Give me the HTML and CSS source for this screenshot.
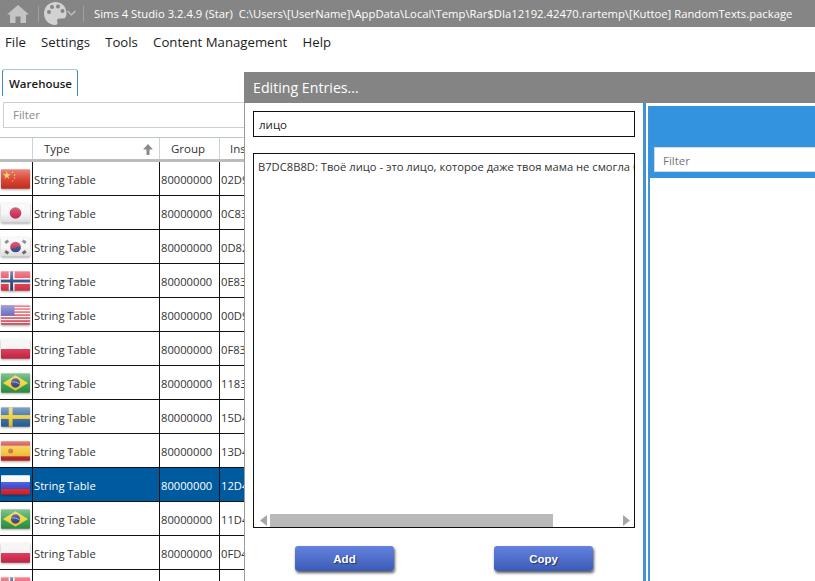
FILE: index.html
```html
<!DOCTYPE html>
<html lang="en">
<head>
<meta charset="utf-8">
<title>Sims 4 Studio</title>
<link rel="stylesheet" href="styles.css">
</head>
<body>
<svg class="defs" width="0" height="0" aria-hidden="true">
  <defs>
    <linearGradient id="gloss" x1="0" y1="0" x2="0" y2="1">
      <stop offset="0" stop-color="#fff" stop-opacity=".42"/>
      <stop offset=".5" stop-color="#fff" stop-opacity=".12"/>
      <stop offset="1" stop-color="#000" stop-opacity=".12"/>
    </linearGradient>
    <symbol id="f-cn" viewBox="0 0 30 20"><rect width="30" height="20" fill="#d8301f"/><path d="M6 2l1 3 3 0-2.500 2 1 3L6 8 3.500 10l1-3L2 5l3 0z" fill="#f6d13c"/><g fill="#f0b030"><circle cx="12" cy="3" r=".8"/><circle cx="14" cy="6" r=".8"/><circle cx="14" cy="9" r=".8"/><circle cx="12" cy="12" r=".8"/></g></symbol>
    <symbol id="f-jp" viewBox="0 0 30 20"><rect width="30" height="20" fill="#f6f6f6"/><circle cx="15" cy="10" r="6" fill="#c9244c"/></symbol>
    <symbol id="f-kr" viewBox="0 0 30 20"><rect width="30" height="20" fill="#f6f6f6"/><circle cx="15" cy="10" r="5.500" fill="#c9244c"/><path d="M9.800 11a5.500 5.500 0 0 0 10.700 0c-1.500-1.800-3.500-1.800-5.300-.5-1.800 1.300-3.900 1.500-5.400.5z" fill="#20488f"/><g fill="#666"><rect x="4" y="3" width="4" height="3" transform="rotate(-35 6 4.500)"/><rect x="22" y="3" width="4" height="3" transform="rotate(35 24 4.500)"/><rect x="4" y="14" width="4" height="3" transform="rotate(35 6 15.500)"/><rect x="22" y="14" width="4" height="3" transform="rotate(-35 24 15.500)"/></g></symbol>
    <symbol id="f-no" viewBox="0 0 30 20"><rect width="30" height="20" fill="#e8344a"/><rect x="8" width="6" height="20" fill="#fff"/><rect y="7" width="30" height="6" fill="#fff"/><rect x="9.500" width="3" height="20" fill="#223f78"/><rect y="8.500" width="30" height="3" fill="#223f78"/></symbol>
    <symbol id="f-us" viewBox="0 0 30 20"><rect width="30" height="20" fill="#fff"/><g fill="#e03345"><rect width="30" height="1.800"/><rect y="3.100" width="30" height="1.500"/><rect y="6.200" width="30" height="1.500"/><rect y="9.300" width="30" height="1.500"/><rect y="12.400" width="30" height="1.500"/><rect y="15.500" width="30" height="1.500"/><rect y="18.500" width="30" height="1.500"/></g><rect width="14" height="10.800" fill="#5a5fb8"/></symbol>
    <symbol id="f-pl" viewBox="0 0 30 20"><rect width="30" height="10" fill="#f2f2f2"/><rect y="10" width="30" height="10" fill="#d9274a"/></symbol>
    <symbol id="f-br" viewBox="0 0 30 20"><rect width="30" height="20" fill="#2f9a48"/><path d="M15 2l13 8-13 8-13-8z" fill="#ecd42a"/><circle cx="15" cy="10" r="4.800" fill="#34387f"/><path d="M10.500 9c3-.6 6.500.3 9 2" stroke="#ddd" stroke-width=".7" fill="none"/></symbol>
    <symbol id="f-se" viewBox="0 0 30 20"><rect width="30" height="20" fill="#2a649f"/><rect x="8" width="4" height="20" fill="#f0cc2e"/><rect y="8" width="30" height="4" fill="#f0cc2e"/></symbol>
    <symbol id="f-es" viewBox="0 0 30 20"><rect width="30" height="20" fill="#f4c430"/><rect width="30" height="4.500" fill="#c8232c"/><rect y="15.500" width="30" height="4.500" fill="#c8232c"/><circle cx="10" cy="10" r="2.600" fill="#c66a2a"/></symbol>
    <symbol id="f-ru" viewBox="0 0 30 20"><rect width="30" height="7" fill="#f6f6f6"/><rect y="7" width="30" height="7" fill="#2c3fd0"/><rect y="14" width="30" height="6" fill="#e2202c"/></symbol>
  </defs>
</svg>

<header class="titlebar">
  <svg class="home" width="22" height="18" viewBox="0 0 22 18"><path d="M11 0 L22 9.500 H19 V18 H13.500 V11.500 H8.500 V18 H3 V9.500 H0 Z" fill="#c4c4c4"/></svg>
  <span class="sep"></span>
  <svg class="palette" width="32" height="23" viewBox="0 0 32 23"><path d="M11.500 0C5 0 0 5 0 11.500S5 23 11 23c2.500 0 3-1.500 2.300-3-.8-1.800.2-3.500 2.200-3.500H19c2 0 3.500-2 3.500-5C22.500 5 18 0 11.500 0z" fill="#d2d2d2"/><g fill="#858585"><circle cx="5" cy="10" r="2"/><circle cx="8" cy="5" r="2"/><circle cx="14" cy="4.500" r="2"/><circle cx="18.500" cy="9" r="2"/></g><path d="M23.500 9l4 4 4-4" fill="none" stroke="#c4c4c4" stroke-width="1.200"/></svg>
  <span class="sep sep-b"></span>
  <span class="apptitle">Sims 4 Studio 3.2.4.9 (Star)&nbsp; C:\Users\[UserName]\AppData\Local\Temp\Rar$DIa12192.42470.rartemp\[Kuttoe] RandomTexts.package</span>
</header>

<nav class="menu">
  <span>File</span><span>Settings</span><span>Tools</span><span>Content Management</span><span>Help</span>
</nav>

<main class="workspace">
  <div class="tabs"><div class="tab">Warehouse</div></div>
  <div class="filter">Filter</div>
  <div class="table">
    <div class="thead">
      <div class="th"></div>
      <div class="th th-type">Type
        <svg class="sort" width="10" height="11" viewBox="0 0 10 11"><path d="M5 0L10 5.500H6.500V11H3.500V5.500H0z" fill="#8a8a8a"/></svg>
      </div>
      <div class="th">Group</div>
      <div class="th">Instance</div>
    </div>
    <div class="tr"><div class="td"><svg class="flag"><use href="#f-cn"/><rect width="30" height="20" fill="url(#gloss)"/></svg></div><div class="td">String Table</div><div class="td">80000000</div><div class="td">02D9C8A1F3</div></div>
    <div class="tr"><div class="td"><svg class="flag"><use href="#f-jp"/><rect width="30" height="20" fill="url(#gloss)"/></svg></div><div class="td">String Table</div><div class="td">80000000</div><div class="td">0C83C8A1F3</div></div>
    <div class="tr"><div class="td"><svg class="flag"><use href="#f-kr"/><rect width="30" height="20" fill="url(#gloss)"/></svg></div><div class="td">String Table</div><div class="td">80000000</div><div class="td">0D82C8A1F3</div></div>
    <div class="tr"><div class="td"><svg class="flag"><use href="#f-no"/><rect width="30" height="20" fill="url(#gloss)"/></svg></div><div class="td">String Table</div><div class="td">80000000</div><div class="td">0E83C8A1F3</div></div>
    <div class="tr"><div class="td"><svg class="flag"><use href="#f-us"/><rect width="30" height="20" fill="url(#gloss)"/></svg></div><div class="td">String Table</div><div class="td">80000000</div><div class="td">00D9C8A1F3</div></div>
    <div class="tr"><div class="td"><svg class="flag"><use href="#f-pl"/><rect width="30" height="20" fill="url(#gloss)"/></svg></div><div class="td">String Table</div><div class="td">80000000</div><div class="td">0F83C8A1F3</div></div>
    <div class="tr"><div class="td"><svg class="flag"><use href="#f-br"/><rect width="30" height="20" fill="url(#gloss)"/></svg></div><div class="td">String Table</div><div class="td">80000000</div><div class="td">1183C8A1F3</div></div>
    <div class="tr"><div class="td"><svg class="flag"><use href="#f-se"/><rect width="30" height="20" fill="url(#gloss)"/></svg></div><div class="td">String Table</div><div class="td">80000000</div><div class="td">15D4C8A1F3</div></div>
    <div class="tr"><div class="td"><svg class="flag"><use href="#f-es"/><rect width="30" height="20" fill="url(#gloss)"/></svg></div><div class="td">String Table</div><div class="td">80000000</div><div class="td">13D4C8A1F3</div></div>
    <div class="tr selected"><div class="td"><svg class="flag"><use href="#f-ru"/><rect width="30" height="20" fill="url(#gloss)"/></svg></div><div class="td">String Table</div><div class="td">80000000</div><div class="td">12D4C8A1F3</div></div>
    <div class="tr"><div class="td"><svg class="flag"><use href="#f-br"/><rect width="30" height="20" fill="url(#gloss)"/></svg></div><div class="td">String Table</div><div class="td">80000000</div><div class="td">11D4C8A1F3</div></div>
    <div class="tr"><div class="td"><svg class="flag"><use href="#f-pl"/><rect width="30" height="20" fill="url(#gloss)"/></svg></div><div class="td">String Table</div><div class="td">80000000</div><div class="td">0FD4C8A1F3</div></div>
    <div class="tr"><div class="td"><svg class="flag"><use href="#f-no"/><rect width="30" height="20" fill="url(#gloss)"/></svg></div><div class="td">String Table</div><div class="td">80000000</div><div class="td">0ED4C8A1F3</div></div>
  </div>
</main>

<section class="dialog">
  <div class="dialog-head">Editing Entries...</div>
  <div class="dialog-body">
    <div class="pane-left">
      <div class="search">лицо</div>
      <div class="list">
        <div class="list-text"><span>B7DC8B8D: Твоё лицо - это лицо, которое даже твоя мама не смогла бы полюбить.</span></div>
        <div class="hscroll">
          <svg class="arrow" width="7" height="11" viewBox="0 0 7 11"><path d="M7 0V11L0 5.500z" fill="#a6a6a6"/></svg>
          <div class="track"><div class="thumb"></div></div>
          <svg class="arrow" width="7" height="11" viewBox="0 0 7 11"><path d="M0 0V11L7 5.500z" fill="#a6a6a6"/></svg>
        </div>
      </div>
      <div class="actions">
        <button class="btn">Add</button>
        <button class="btn">Copy</button>
      </div>
    </div>
    <div class="pane-right">
      <div class="pane-inner">
        <div class="blue-head"><div class="blue-filter">Filter</div></div>
      </div>
    </div>
  </div>
</section>
</body>
</html>
```

FILE: styles.css
```css
* { box-sizing: border-box; }
html, body { margin: 0; height: 100%; overflow: hidden; }
body {
  background: #fff;
  color: #222;
  font-family: "Open Sans", "Noto Sans", "Noto Sans CJK SC", sans-serif;
  font-size: 11.2px;
  position: relative;
}
.defs { position: absolute; }

.titlebar {
  height: 27px;
  background: #858585;
  display: flex;
  align-items: center;
  padding-left: 7px;
  color: #fff;
}
.home { margin-top: 1px; flex: none; }
.sep { width: 1px; height: 16px; background: #a0a0a0; margin: 0 5px 0 9px; flex: none; }
.sep-b { margin: 0 10px 0 7px; }
.palette { flex: none; }
.apptitle { font-size: 11.27px; white-space: nowrap; }

.menu {
  height: 29px;
  display: flex;
  align-items: center;
  gap: 15.2px;
  padding-left: 5px;
  font-size: 13.2px;
  color: #1c1c1c;
}

.workspace { display: flex; flex-direction: column; }
.tabs { height: 40px; padding: 13px 0 0 2px; border: 0; }
.tab {
  width: 76px;
  height: 27px;
  border: 1px solid #3f8fc4;
  border-bottom: 0;
  border-color: #a9c6d8 #3f8fc4 #3f8fc4 #3f8fc4;
  border-radius: 3px 3px 0 0;
  font-weight: 600;
  padding: 6px 0 0 6px;
  font-size: 11.5px;
  color: #1a1a1a;
}
.filter {
  margin: 6px 0 0 3px;
  height: 26px;
  border: 1px solid #cfcfcf;
  padding: 4px 0 0 9px;
  color: #8a8a8a;
  font-size: 11.5px;
}

.table { margin-top: 9px; border-top: 1px solid #b9c7cf; }
.thead, .tr { display: grid; grid-template-columns: 33px 127px 60px 1fr; }
.thead { height: 24px; border-bottom: 3px solid #bcbcbc; }
.th {
  border-right: 1px solid #c9d3d9;
  padding: 3px 0 0 11px;
  color: #333;
  font-weight: 500;
  font-size: 11.5px;
  display: flex;
  align-items: flex-start;
  justify-content: space-between;
  white-space: nowrap;
}
.th:last-child { border-right: 0; padding-left: 10px; justify-content: flex-start; }
.sort { margin: 3px 6px 0 0; }
.tr { height: 34px; border-bottom: 1px solid #111; }
.td {
  border-right: 1px solid #111;
  padding: 2px 0 0 1px;
  display: flex;
  align-items: center;
  white-space: nowrap;
  overflow: hidden;
  color: #333;
}
.td:first-child { padding-top: 1px; }
.td:last-child { border-right: 0; }
.flag {
  width: 29px;
  height: 20px;
  flex: none;
  border-radius: 1px;
  filter: drop-shadow(0 1px 1px rgba(0,0,0,.35));
}
.selected { background: #005a9e; }
.selected .td { color: #fff; }

.dialog {
  position: absolute;
  left: 244px;
  top: 72px;
  right: 0;
  bottom: 0;
  background: #fff;
  display: flex;
  flex-direction: column;
  border-left: 1px solid #9a9a9a;
}
.dialog-head {
  height: 31px;
  margin-left: -1px;
  background: #848484;
  color: #fff;
  font-size: 14.2px;
  padding: 6px 0 0 9px;
  flex: none;
}
.dialog-body { flex: 1; display: flex; min-height: 0; }
.pane-left {
  width: 398px;
  flex: none;
  padding: 8px 8px 0 8px;
  display: flex;
  flex-direction: column;
}
.search {
  height: 26px;
  border: 1.5px solid #111;
  padding: 5px 0 0 5px;
  font-size: 11.5px;
  flex: none;
  color: #222;
}
.list {
  margin-top: 16px;
  height: 375px;
  border: 1.5px solid #111;
  display: flex;
  flex-direction: column;
  flex: none;
}
.list-text {
  flex: 1;
  padding: 5px 0 0 4px;
  overflow: hidden;
  white-space: nowrap;
  color: #333;
}
.hscroll {
  height: 13px;
  display: flex;
  align-items: center;
  gap: 3px;
  padding: 0 4px 0 6px;
  flex: none;
}
.arrow { flex: none; }
.track { flex: 1; height: 13px; }
.thumb { width: 283px; height: 13px; background: #b9b9b9; }
.actions {
  margin-top: 18px;
  display: flex;
  justify-content: space-between;
  padding: 0 42px 0 42px;
}
.btn {
  width: 99px;
  height: 25px;
  border: 0;
  border-radius: 3px;
  background: linear-gradient(#6382de, #3b5cb6);
  box-shadow: 1px 2px 3px rgba(0,0,0,.65);
  color: #fff;
  font: 700 11.5px "Liberation Sans", sans-serif;
  text-shadow: 1px 1px 1px rgba(0,0,0,.5);
  padding: 0;
}
.pane-right {
  flex: 1;
  border-left: 3px solid #3f93d6;
  padding: 0 0 0 2px;
  min-width: 0;
}
.pane-inner { height: 100%; border-left: 2px solid #3f93d6; margin-top: 1px; }
.blue-head {
  background: #3393de;
  height: 72px;
  margin-left: -1px;
  margin-top: 3px;
  padding: 41px 0 0 5px;
}
.blue-filter {
  height: 25px;
  background: #fff;
  border: 1px solid #d8d8d8;
  border-right: 0;
  padding: 5px 0 0 8px;
  color: #777;
  font-size: 11.5px;
}
```
